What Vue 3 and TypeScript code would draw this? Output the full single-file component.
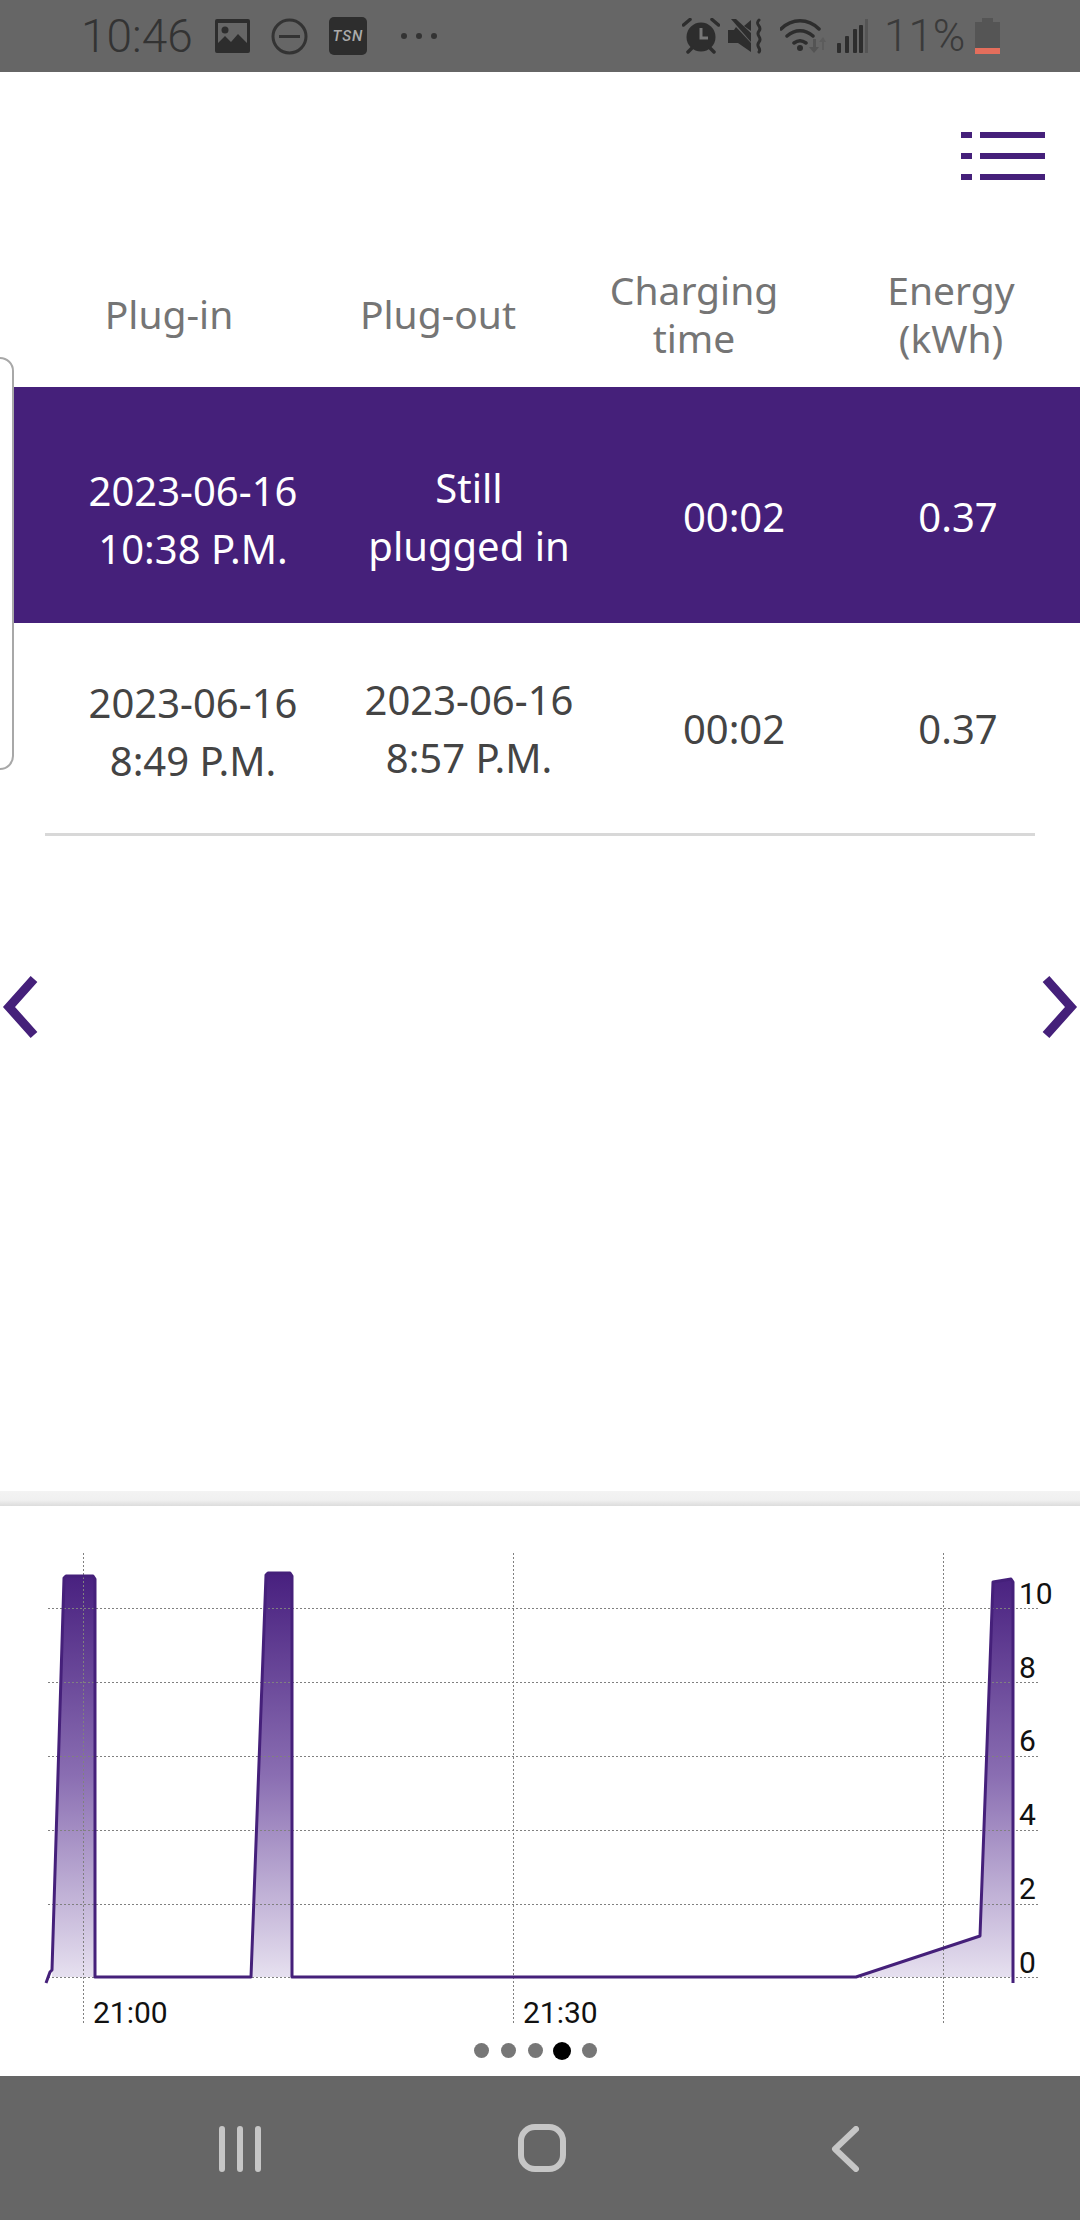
<template>
  <div class="page">
    <div class="status">
      <div class="status-left">
        <span class="time">10:46</span>
        <svg class="ic-image" width="35" height="34" viewBox="0 0 35 34">
          <path fill="#2d2d2d" fill-rule="evenodd" d="M2 0h31a2 2 0 0 1 2 2v30a2 2 0 0 1-2 2H2a2 2 0 0 1-2-2V2a2 2 0 0 1 2-2zM3 4v20l7-7 6 6 7-8 9 9V4z" />
          <circle cx="10" cy="11" r="3.5" fill="#2d2d2d" />
        </svg>
        <svg class="ic-dnd" width="37" height="37" viewBox="0 0 37 37">
          <circle cx="18.5" cy="18.5" r="16.5" fill="none" stroke="#333" stroke-width="3" />
          <rect x="8" y="17" width="21" height="3" fill="#333" />
        </svg>
        <div class="tsn">TSN</div>
        <svg class="ic-more" width="36" height="8" viewBox="0 0 36 8">
          <circle cx="3" cy="4" r="3" fill="#333" />
          <circle cx="18" cy="4" r="3" fill="#333" />
          <circle cx="33" cy="4" r="3" fill="#333" />
        </svg>
      </div>
      <div class="status-right">
        <svg width="38" height="36" viewBox="0 0 38 36">
          <circle cx="19" cy="19" r="14.5" fill="#2d2d2d" />
          <path d="M19 10v10h7" fill="none" stroke="#777" stroke-width="3" />
          <path d="M1.5 7 8 1.5M36.5 7 30 1.5M6 34l4-4M32 34l-4-4" stroke="#2d2d2d" stroke-width="3.5" stroke-linecap="round" />
        </svg>
        <svg class="ic-mute" width="35" height="36" viewBox="0 0 35 36">
          <path d="M0 12h6l2-3 15 16v9L10 25H0z" fill="#2d2d2d" />
          <path d="M3 1l20 23V15L8 1z" fill="#2d2d2d" />
          <path d="M16 8l7-6v11z" fill="#2d2d2d" />
          <path d="M31 2c-5 5 4 6 0 11s4 6 0 11 3 6 0 10" fill="none" stroke="#2d2d2d" stroke-width="3" stroke-linecap="round" />
        </svg>
        <svg class="ic-wifi" width="46" height="36" viewBox="0 0 46 36">
          <path d="M1 11C12 0 28 0 39 11M7 18c8-7 18-7 26 0M14 25c4-3 8-3 12 0" fill="none" stroke="#2d2d2d" stroke-width="3.5" stroke-linecap="round" />
          <circle cx="20" cy="30" r="3" fill="#2d2d2d" />
          <path d="M33 21v8h-4l5 6 5-6h-3v-8z" fill="#545454" />
          <path d="M43 19l-4 5h3v8h2v-8h2z" fill="#5c5c5c" />
        </svg>
        <svg class="ic-signal" width="31" height="34" viewBox="0 0 31 34">
          <rect x="0" y="24" width="4" height="10" rx="1" fill="#2d2d2d" />
          <rect x="8" y="17" width="4" height="17" rx="1" fill="#2d2d2d" />
          <rect x="16" y="10" width="4" height="24" rx="1" fill="#2d2d2d" />
          <rect x="22" y="6" width="4" height="28" rx="1" fill="#2d2d2d" />
          <rect x="28" y="0" width="3" height="34" fill="#555" />
        </svg>
        <span class="pct">11%</span>
        <div class="battery"><div class="battery-level"></div></div>
      </div>
    </div>

    <div class="top">
      <svg class="menu" width="84" height="48" viewBox="0 0 84 48">
        <g fill="#45207a">
          <rect x="0" y="0" width="11" height="6" />
          <rect x="19" y="0" width="65" height="6" />
          <rect x="0" y="21" width="11" height="6" />
          <rect x="19" y="21" width="65" height="6" />
          <rect x="0" y="42" width="11" height="6" />
          <rect x="19" y="42" width="65" height="6" />
        </g>
      </svg>
    </div>

    <div class="table-head">
      <div>Plug-in</div>
      <div>Plug-out</div>
      <div>Charging<br />time</div>
      <div>Energy<br />(kWh)</div>
    </div>

    <div class="table">
      <div class="drawer-peek"></div>
      <div class="row active">
        <div class="first">2023-06-16<br />10:38 P.M.</div>
        <div>Still<br />plugged in</div>
        <div>00:02</div>
        <div>0.37</div>
      </div>
      <div class="row">
        <div class="first">2023-06-16<br />8:49 P.M.</div>
        <div>2023-06-16<br />8:57 P.M.</div>
        <div>00:02</div>
        <div>0.37</div>
      </div>
      <div class="divider"></div>
    </div>

    <div class="pager">
      <svg width="40" height="66" viewBox="0 0 40 66">
        <path d="M34 4 9 32l25 28" fill="none" stroke="#45207a" stroke-width="9" />
      </svg>
      <svg width="40" height="66" viewBox="0 0 40 66">
        <path d="M6 4l25 28L6 60" fill="none" stroke="#45207a" stroke-width="9" />
      </svg>
    </div>

    <div class="chart-panel">
      <div class="strip"></div>
      <svg class="chart" width="1080" height="534" viewBox="0 1506 1080 534">
        <defs>
          <linearGradient id="area" gradientUnits="userSpaceOnUse" x1="0" y1="1574" x2="0" y2="1977">
            <stop offset="0" stop-color="#48207f" />
            <stop offset="0.5" stop-color="#8a6eb2" />
            <stop offset="1" stop-color="#e6e0ef" />
          </linearGradient>
        </defs>
        <path class="area" :d="areaPath" fill="url(#area)" />
        <g class="grid">
          <line v-for="y in gridY" :key="y" x1="48" :y1="y" x2="1038" :y2="y" />
          <line v-for="x in gridX" :key="x" :x1="x" y1="1553" :x2="x" y2="2023" />
        </g>
        <path :d="linePath" fill="none" stroke="#45207a" stroke-width="3" stroke-linejoin="round" />
        <g class="labels">
          <text v-for="t in yLabels" :key="t.label" x="1019" :y="t.y">{{ t.label }}</text>
          <text x="93" y="2023">21:00</text>
          <text x="523" y="2023">21:30</text>
        </g>
      </svg>
      <div class="dots">
        <span v-for="n in 5" :key="n" :class="{ on: n === 4 }"></span>
      </div>
    </div>

    <div class="nav">
      <svg class="nav-recent" width="42" height="46" viewBox="0 0 42 46">
        <path d="M3 3v40M21 3v40M39 3v40" stroke="#c6c6c6" stroke-width="6" stroke-linecap="round" />
      </svg>
      <svg class="nav-home" width="48" height="48" viewBox="0 0 48 48">
        <rect x="3" y="3" width="42" height="42" rx="14" fill="none" stroke="#c6c6c6" stroke-width="6" />
      </svg>
      <svg class="nav-back" width="28" height="46" viewBox="0 0 28 46">
        <path d="M25 3 4 23l21 20" fill="none" stroke="#c6c6c6" stroke-width="6" stroke-linecap="round" stroke-linejoin="round" />
      </svg>
    </div>
  </div>
</template>

<script setup lang="ts">
const gridY = [1608.5, 1682.5, 1756.5, 1830.5, 1904.5, 1977.5]
const gridX = [83.5, 513.5, 943.5]

const yLabels = [
  { label: '10', y: 1604 },
  { label: '8', y: 1678 },
  { label: '6', y: 1751 },
  { label: '4', y: 1825 },
  { label: '2', y: 1899 },
  { label: '0', y: 1973 }
]

const linePath =
  'M46 1983 L50 1972 L52 1970 L64 1578 L66 1576 L93 1576 L95 1579 L95 1977 L251 1977 ' +
  'L266 1575 L268 1573 L290 1573 L292 1576 L292 1977 L856 1977 L980 1936 L993 1582 ' +
  'L1011 1579 L1013 1582 L1013 1983'

const areaPath =
  'M52 1977 L64 1578 L66 1576 L93 1576 L95 1579 L95 1977 Z ' +
  'M251 1977 L266 1575 L268 1573 L290 1573 L292 1576 L292 1977 Z ' +
  'M856 1977 L980 1936 L993 1582 L1011 1579 L1013 1582 L1013 1977 Z'
</script>

<style>
body {
  background: #fff;
}
</style>

<style scoped>
.page {
  width: 1080px;
  height: 2220px;
  display: flex;
  flex-direction: column;
  background: #fff;
  overflow: hidden;
}

.status {
  height: 72px;
  flex: none;
  background: #666;
  display: flex;
  justify-content: space-between;
  align-items: center;
  padding: 0 80px 0 81px;
  box-sizing: border-box;
  color: #333;
  font-family: Roboto, sans-serif;
}

.status-left,
.status-right {
  display: flex;
  align-items: center;
}

.time {
  font-size: 46px;
  font-weight: 300;
  width: 109px;
  margin-right: 25px;
}

.ic-image {
  margin-right: 21px;
}

.ic-dnd {
  margin-right: 21px;
}

.tsn {
  width: 38px;
  height: 38px;
  margin-right: 34px;
  border-radius: 5px;
  background: #2d2d2d;
  color: #aaa;
  font-size: 15px;
  font-weight: 500;
  font-style: italic;
  letter-spacing: 1px;
  line-height: 38px;
  text-align: center;
}

.ic-mute {
  margin-left: 8px;
}

.ic-wifi {
  margin-left: 17px;
}

.ic-signal {
  margin-left: 11px;
}

.pct {
  font-size: 44px;
  font-weight: 300;
  width: 78px;
  margin-left: 16px;
  white-space: nowrap;
  color: #3a3a3a;
}

.battery {
  width: 25px;
  height: 32px;
  margin: 4px 0 0 13px;
  background: #555;
  position: relative;
  display: flex;
  align-items: flex-end;
}

.battery::before {
  content: '';
  position: absolute;
  top: -4px;
  left: 7px;
  width: 11px;
  height: 4px;
  background: #555;
}

.battery-level {
  width: 100%;
  height: 6px;
  background: #e46e5c;
}

.top {
  height: 122px;
  flex: none;
  display: flex;
  justify-content: flex-end;
  align-items: flex-start;
  padding: 60px 35px 0 0;
  box-sizing: border-box;
}

.table-head {
  height: 193px;
  flex: none;
  display: grid;
  grid-template-columns: 338px 200px 312px 202px;
  align-items: center;
  align-content: end;
  padding-bottom: 25px;
  box-sizing: border-box;
  font-family: 'Noto Sans', sans-serif;
  font-size: 39px;
  line-height: 48px;
  color: #757575;
  text-align: center;
}

.table {
  position: relative;
  flex: none;
  font-family: 'Noto Sans', sans-serif;
  font-size: 40px;
  line-height: 58px;
  color: #444;
  text-align: center;
}

.drawer-peek {
  position: absolute;
  left: -20px;
  top: -30px;
  width: 30px;
  height: 409px;
  border: 2px solid #a8a8a8;
  border-radius: 14px;
}

.row {
  margin-left: 14px;
  display: grid;
  grid-template-columns: 358px 194px 336px 112px;
  justify-items: center;
  align-items: center;
  height: 210px;
  padding-top: 2px;
  box-sizing: border-box;
  white-space: nowrap;
}

.row.active {
  height: 236px;
  padding-top: 24px;
  background: #45207a;
  color: #fff;
}

.row .first {
  padding-top: 6px;
}

.divider {
  height: 3px;
  margin: 0 45px;
  background: #d8d8d8;
}

.pager {
  flex: none;
  display: flex;
  justify-content: space-between;
  padding: 139px 0 0;
}

.chart-panel {
  flex: none;
  margin-top: 450px;
}

.strip {
  height: 15px;
  background: linear-gradient(#f3f3f3, #f0f0f0 60%, #dcdcdc);
}

.chart {
  display: block;
}

.grid line {
  stroke: #808080;
  stroke-width: 1;
  stroke-dasharray: 2 2;
}

.labels text {
  font-family: Roboto, sans-serif;
  font-size: 30px;
  fill: #111;
}

.dots {
  height: 36px;
  display: flex;
  align-items: flex-start;
  justify-content: center;
  gap: 12px;
  padding-right: 10px;
}

.dots span {
  width: 15px;
  height: 15px;
  margin-top: 3px;
  border-radius: 50%;
  background: #777;
}

.dots span.on {
  width: 18px;
  height: 18px;
  margin: 2px -1.5px 0;
  background: #000;
}

.nav {
  flex: none;
  height: 144px;
  background: #666;
  display: flex;
  align-items: flex-start;
  padding: 50px 0 0 219px;
  box-sizing: border-box;
}

.nav-home {
  margin-left: 257px;
  margin-top: -2px;
}

.nav-back {
  margin-left: 265px;
}
</style>
